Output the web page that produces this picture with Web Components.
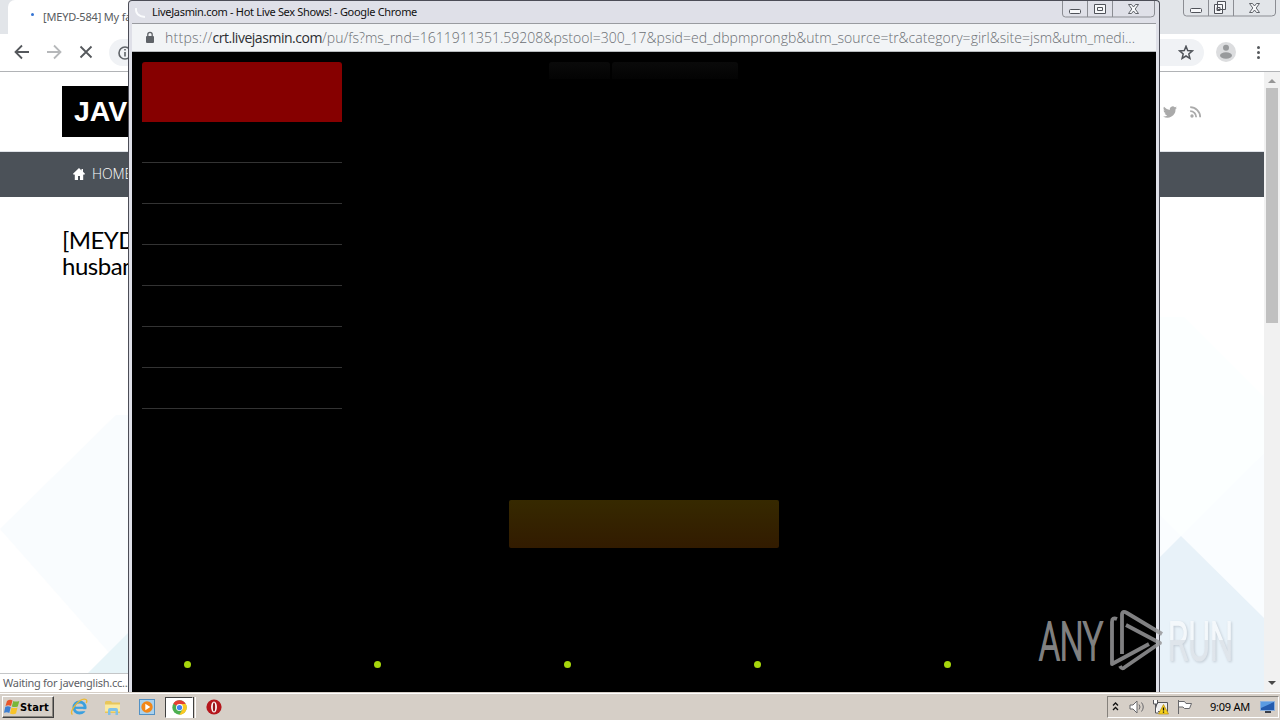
<!DOCTYPE html>
<html lang="en">
<head>
<meta charset="utf-8">
<title>Desktop</title>
<style>
    html, body { margin: 0; width: 1280px; height: 720px; overflow: hidden; }
</style>
</head>
<body>
<desktop-screen></desktop-screen>

<script>
// Text set to a fixed run length by spreading the difference over its letters
class TextRun extends HTMLElement {
    connectedCallback() {
        this.attachShadow({ mode: 'open' }).innerHTML =
            '<style>:host { display: inline-block; white-space: nowrap; flex: none; }</style><slot></slot>';
        const target = Number(this.getAttribute('length'));
        const natural = this.getBoundingClientRect().width;
        this.style.letterSpacing = (target - natural) / this.textContent.length + 'px';
    }
}
customElements.define('text-run', TextRun);

class CaptionButtons extends HTMLElement {
    connectedCallback() {
        const middle = this.hasAttribute('restore')
            ? '<path d="M34.500 2.500h8v8h-8zM31.500 5.500h8v9h-8zM34 8.500h3v3h-3z"/>'
            : '<path d="M32.500 4.500h11v9h-11zM35.500 7.500h5v3h-5z"/>';
        this.attachShadow({ mode: 'open' }).innerHTML = `
            <style>
                :host { display: block; width: 93px; height: 18px; }
                svg { display: block; }
            </style>
            <svg width="93" height="18" fill="none" stroke="#50535a">
                <path stroke="#8b8d93" d="M.5 0v14q0 3 3 3h85q4 0 4-3V0M25.500 0v17M50.500 0v17"/>
                <rect x="7.500" y="9.500" width="11" height="4" rx="1" fill="#f7f8fa"/>
                <g fill="#f7f8fa">${middle}</g>
                <path fill="#f7f8fa" stroke-width=".9" d="M66.500 4.500h3l2 2.500 2-2.500h3l-3.300 4.500 3.300 4.500h-3l-2-2.500-2 2.500h-3L69.800 9z"/>
            </svg>
        `;
    }
}
customElements.define('caption-buttons', CaptionButtons);

class ScrollBar extends HTMLElement {
    connectedCallback() {
        this.attachShadow({ mode: 'open' }).innerHTML = `
            <style>
                :host {
                    display: flex;
                    flex-direction: column;
                    align-items: center;
                    width: 16px;
                    background: #f1f1f1;
                }
                svg { display: block; height: 16px; }
                .thumb { width: 12px; height: 235px; background: #c0c0c0; }
                .rest { flex: 1; }
            </style>
            <svg width="16" height="16"><path fill="#969696" d="M4 11l4-4 4 4z"/></svg>
            <div class="thumb"></div>
            <div class="rest"></div>
            <svg width="16" height="16"><path fill="#484848" d="M4 5h8l-4 4z"/></svg>
        `;
    }
}
customElements.define('scroll-bar', ScrollBar);

class SitePage extends HTMLElement {
    connectedCallback() {
        this.attachShadow({ mode: 'open' }).innerHTML = `
            <style>
                :host {
                    display: block;
                    background: #fff;
                    overflow: hidden;
                    position: relative;
                    font-family: Lato, sans-serif;
                }
                .shapes { position: absolute; left: 0; top: 0; }
                header {
                    position: relative;
                    display: flex;
                    justify-content: space-between;
                    height: 80px;
                    padding: 14px 62px 0 62px;
                    box-sizing: border-box;
                    border-bottom: 1px solid #dfe2e8;
                }
                .logo {
                    width: 180px;
                    height: 51px;
                    padding-left: 12px;
                    box-sizing: border-box;
                    background: #000;
                    color: #fff;
                    font: bold 28.5px/51px "Liberation Sans", Arial, sans-serif;
                }
                .social { padding-top: 19px; display: flex; gap: 12px; }
                .social svg { display: block; }
                nav {
                    position: relative;
                    display: flex;
                    align-items: center;
                    gap: 7px;
                    height: 45px;
                    padding-left: 73px;
                    background: #4b5158;
                    color: #fff;
                    font: 300 14px "Open Sans", sans-serif;
                }
                nav svg { margin-bottom: 1px; }
                nav text-run { margin-bottom: 2px; }
                h1 {
                    position: relative;
                    display: flex;
                    flex-direction: column;
                    align-items: flex-start;
                    margin: 30px 0 0 62px;
                    font-weight: 400;
                    font-size: 24px;
                    line-height: 26px;
                    color: #000;
                }
            </style>
            <svg class="shapes" width="1264" height="620">
                <path fill="#f9fcfe" d="M0 457L116 343H140V602H128z"/>
                <path fill="#e7f4f8" d="M88 601L140 549V620H69z"/>
                <path fill="#fcffff" d="M1150 245H1184L1264 325V620H1150z"/>
                <path fill="#fafdff" d="M1264 382L1181 464 1150 434V620H1264z"/>
                <path fill="#e8f2f9" d="M1150 495L1181 464 1264 546V620H1150z"/>
            </svg>
            <header>
                <div class="logo">JAV</div>
                <div class="social">
                    <svg width="14" height="14" viewBox="0 0 24 24" fill="#aaa"><path d="M24 4.600a10 10 0 0 1-2.800.8 5 5 0 0 0 2.100-2.700 10 10 0 0 1-3.100 1.200 4.900 4.900 0 0 0-8.400 4.500A14 14 0 0 1 1.700 3.200a4.900 4.900 0 0 0 1.500 6.500 5 5 0 0 1-2.200-.6 4.900 4.900 0 0 0 4 4.900 5 5 0 0 1-2.200.1 4.900 4.900 0 0 0 4.600 3.400A10 10 0 0 1 0 19.500 14 14 0 0 0 21.500 7.100z"/></svg>
                    <svg width="13" height="14" fill="none" stroke="#aaa" stroke-width="1.800"><circle cx="3" cy="11" r=".8"/><path d="M1.200 6.200a6 6 0 0 1 6 6M1.200 2.200a10 10 0 0 1 10 10"/></svg>
                </div>
            </header>
            <nav>
                <svg width="12" height="12" fill="#fff"><path d="M6 0L0 5.800 1 7l.8-.7V12H5V8h2v4h3.200V6.300L11 7l1-1.200-2-2V1H8.500v1.400z"/></svg>
                <text-run length="40">HOME</text-run>
            </nav>
            <h1><text-run length="74">[MEYD</text-run><text-run length="73">husban</text-run></h1>
        `;
    }
}
customElements.define('site-page', SitePage);

class MainBrowser extends HTMLElement {
    connectedCallback() {
        this.attachShadow({ mode: 'open' }).innerHTML = `
            <style>
                :host {
                    display: flex;
                    flex-direction: column;
                    overflow: hidden;
                }
                .strip {
                    display: flex;
                    justify-content: space-between;
                    height: 34px;
                    padding: 0 4px 0 8px;
                    background: #e2e5e9;
                }
                .strip caption-buttons { margin-top: -1px; }
                .tab {
                    display: flex;
                    align-items: center;
                    gap: 9px;
                    width: 240px;
                    padding: 0 0 2px 23px;
                    box-sizing: border-box;
                    background: #fff;
                    border-radius: 7px 7px 0 0;
                    font: 11px "Noto Sans", sans-serif;
                    color: #585b60;
                }
                .tab i { width: 3px; height: 3px; margin-top: -4px; border-radius: 50%; background: #3474d4; }
                .bar {
                    display: flex;
                    align-items: center;
                    height: 37px;
                    background: #fff;
                    border-bottom: 1px solid #b1b3b6;
                }
                .omni {
                    display: flex;
                    align-items: center;
                    justify-content: space-between;
                    width: 1095px;
                    height: 27px;
                    padding: 0 10px 0 9px;
                    box-sizing: border-box;
                    border-radius: 14px;
                    background: #f0f2f5;
                }
                svg { display: block; flex: none; }
                .body { display: flex; flex: 1; min-height: 0; }
                site-page { flex: 1; }
                .status {
                    position: absolute;
                    left: 0;
                    bottom: 0;
                    width: 200px;
                    height: 19px;
                    padding-left: 3px;
                    box-sizing: border-box;
                    background: #fff;
                    border-top: 1px solid #c4c6c8;
                    font: 11px/18px "Noto Sans", sans-serif;
                    color: #5d6065;
                }
            </style>
            <div class="strip">
                <div class="tab"><i></i><text-run length="92">[MEYD-584] My fat</text-run></div>
                <caption-buttons restore></caption-buttons>
            </div>
            <div class="bar">
                <svg width="109" height="37" fill="none" stroke-width="1.800">
                    <path stroke="#55585c" d="M29 18H16M22 11.500L15.500 18l6.500 6.500"/>
                    <path stroke="#b6b8ba" d="M47 18h13M54 11.500l6.500 6.500-6.500 6.500"/>
                    <path stroke="#55585c" d="M80.500 12.500l11 11M91.500 12.500l-11 11"/>
                </svg>
                <div class="omni">
                    <svg width="14" height="14" fill="none" stroke="#5f6368" stroke-width="1.600"><circle cx="7" cy="7" r="6"/><path d="M7 6v4.500M7 3v1.600"/></svg>
                    <svg width="16" height="16" fill="none" stroke="#50545a" stroke-width="1.500"><path d="M8 1.300l1.700 4.300 4.600.3-3.500 3 1.100 4.500L8 11l-3.900 2.400 1.100-4.500-3.500-3 4.600-.3z"/></svg>
                </div>
                <svg width="76" height="37">
                    <circle cx="22" cy="18" r="10" fill="#dcdddf"/>
                    <circle cx="22" cy="13.800" r="3" fill="#989a9c"/>
                    <ellipse cx="22" cy="21.500" rx="6" ry="3.200" fill="#989a9c"/>
                    <g fill="#55585c"><circle cx="54.500" cy="13.500" r="1.500"/><circle cx="54.500" cy="18.500" r="1.500"/><circle cx="54.500" cy="23.500" r="1.500"/></g>
                </svg>
            </div>
            <div class="body">
                <site-page></site-page>
                <scroll-bar></scroll-bar>
            </div>
            <div class="status"><text-run length="127">Waiting for javenglish.cc...</text-run></div>
        `;
    }
}
customElements.define('main-browser', MainBrowser);

class CamPage extends HTMLElement {
    connectedCallback() {
        this.attachShadow({ mode: 'open' }).innerHTML = `
            <style>
                :host {
                    display: grid;
                    grid-template-columns: 200px 1fr 200px;
                    grid-template-rows: 438px 1fr auto;
                    padding: 10px 10px 24px;
                    background: #000;
                }
                .banner { height: 60px; border-radius: 3px 3px 0 0; background: #860000; }
                .row { height: 40px; border-bottom: 1px solid #333; }
                .tabs { display: flex; justify-content: center; gap: 2px; padding-right: 1px; }
                .tabs div { width: 61px; height: 17px; border-radius: 3px 3px 0 0; background: linear-gradient(#0a0a0a, #030303); }
                .tabs div + div { width: 126px; }
                .cta {
                    grid-column: 1 / 4;
                    justify-self: center;
                    width: 270px;
                    height: 48px;
                    border-radius: 2px;
                    background: linear-gradient(#362900, #321b00);
                }
                .dots { grid-column: 1 / 4; display: flex; gap: 183px; padding-left: 42px; }
                .dots i { width: 7px; height: 7px; border-radius: 50%; background: #a6d60c; }
            </style>
            <div>
                <div class="banner"></div>
                ${'<div class="row"></div>'.repeat(7)}
            </div>
            <div class="tabs"><div></div><div></div></div>
            <div></div>
            <div class="cta"></div>
            <div class="dots">${'<i></i>'.repeat(5)}</div>
        `;
    }
}
customElements.define('cam-page', CamPage);

class PopupBrowser extends HTMLElement {
    connectedCallback() {
        this.attachShadow({ mode: 'open' }).innerHTML = `
            <style>
                :host {
                    display: flex;
                    flex-direction: column;
                    box-sizing: border-box;
                    padding: 0 3px;
                    border: 1px solid #4c4d57;
                    border-bottom: 0;
                    border-radius: 4px 4px 0 0;
                    background: #dfe0e8;
                    overflow: hidden;
                }
                .title {
                    display: flex;
                    height: 22px;
                    padding-right: 1px;
                    font: 11px/22px "Noto Sans", sans-serif;
                    color: #111;
                }
                .title svg { margin: 3px 2px 0 0; }
                caption-buttons { margin-left: auto; margin-top: -1px; }
                .address {
                    display: flex;
                    align-items: center;
                    gap: 10px;
                    height: 27px;
                    padding-left: 13px;
                    background: #f2f4f6;
                    border-top: 1px solid #999ba0;
                    border-bottom: 1px solid #b7babd;
                    font: 300 14px "Open Sans", sans-serif;
                    color: #6b6f74;
                }
                .url { display: flex; }
                .url b { font-weight: 400; color: #2c2e32; }
                cam-page { flex: 1; }
            </style>
            <div class="title">
                <svg width="18" height="16" fill="none" stroke="#fafbfd" stroke-width="1.800"><path d="M4 4q-1 8 9 9"/></svg>
                <text-run length="265">LiveJasmin.com - Hot Live Sex Shows! - Google Chrome</text-run>
                <caption-buttons></caption-buttons>
            </div>
            <div class="address">
                <svg width="10" height="13"><rect x="1" y="5" width="8" height="7" rx="1" fill="#5f6368"/><path d="M2.800 5V3.500a2.200 2.200 0 0 1 4.400 0V5" fill="none" stroke="#5f6368" stroke-width="1.300"/></svg>
                <div class="url"><text-run length="47.500">https://</text-run><b><text-run length="109.500">crt.livejasmin.com</text-run></b><text-run length="813">/pu/fs?ms_rnd=1611911351.59208&amp;pstool=300_17&amp;psid=ed_dbpmprongb&amp;utm_source=tr&amp;category=girl&amp;site=jsm&amp;utm_medi...</text-run></div>
            </div>
            <cam-page></cam-page>
        `;
    }
}
customElements.define('popup-browser', PopupBrowser);

class TaskBar extends HTMLElement {
    connectedCallback() {
        this.attachShadow({ mode: 'open' }).innerHTML = `
            <style>
                :host {
                    display: flex;
                    align-items: center;
                    justify-content: space-between;
                    height: 28px;
                    padding: 2px 1px 0 2px;
                    box-sizing: border-box;
                    background: linear-gradient(#d6cfc7 1px, #fff 1px, #fff 2px, #d6cfc7 2px);
                    color: #000;
                }
                .left, .start, .tray { display: flex; align-items: center; }
                .start {
                    width: 52px;
                    height: 22px;
                    margin-right: 16px;
                    padding-left: 1px;
                    box-sizing: border-box;
                    border: 1px solid;
                    border-color: #fff #404040 #404040 #fff;
                    box-shadow: inset -1px -1px #8a867f;
                    font: bold 11px "DejaVu Sans Condensed", sans-serif;
                }
                svg { display: block; flex: none; }
                .active {
                    display: flex;
                    align-items: center;
                    justify-content: center;
                    width: 28px;
                    height: 21px;
                    margin-left: 9px;
                    box-sizing: border-box;
                    background: #fff;
                    border: 1px solid;
                    border-color: #404040 #fff #fff #404040;
                }
                .stack { width: 1px; height: 21px; margin: 0 10px 0 0; border: solid #fff; border-width: 0 1px; border-left-color: #404040; }
                .tray {
                    width: 172px;
                    height: 22px;
                    box-sizing: border-box;
                    border: 1px solid;
                    border-color: #85817b #fff #fff #85817b;
                    font: 11px "Noto Sans", sans-serif;
                }
                .tray text-run { margin: 0 0 1px 1px; }
            </style>
            <div class="left">
                <div class="start">
                    <svg width="16" height="18">
                        <path fill="#e8562a" d="M3 3q3-2 5.500-.5L7 8Q4.500 6.500 1.500 8z"/>
                        <path fill="#79b739" d="M9.300 3q2.500 1.200 6 0l-1.500 5.500Q10.500 9.500 7.800 8.500z"/>
                        <path fill="#3d7fd2" d="M1.300 8.800Q4 7.500 6.800 9l-1.500 6Q3 13.500 0 14.800z"/>
                        <path fill="#f8c328" d="M7.500 9.500q3 1 6 0l-1.500 6q-3 1.300-6 0z"/>
                    </svg>
                    <text-run length="29">Start</text-run>
                </div>
                <svg width="18" height="18" fill="none">
                    <circle cx="9.500" cy="9.500" r="5.600" stroke="#3ba0df" stroke-width="3"/>
                    <path stroke="#3ba0df" stroke-width="2.200" d="M5 9.800h9.500"/>
                    <path stroke="#d6cfc7" stroke-width="2" d="M11 12.200h6"/>
                    <path stroke="#edb92f" stroke-width="1.300" d="M2.500 16.500C-2 14 10-1 16 1.500q1.500 1 .3 3.500"/>
                </svg>
                <svg width="18" height="18" style="margin-left:16px">
                    <path fill="#e8c65a" d="M1 4l1-1h5l1 1.500h8V15H1z"/>
                    <path fill="#fbeaa0" d="M1 6.500h15v7H1z"/>
                    <path fill="#7fc1e8" d="M4 17v-5q0-2 2-2h6q2 0 2 2v5h-2.500v-4h-5v4z"/>
                </svg>
                <svg width="18" height="18" style="margin-left:16px">
                    <rect x="1.500" y="1.500" width="15" height="15" fill="#a9d1ed" stroke="#5291c4"/>
                    <circle cx="9" cy="9" r="5.700" fill="#f28718"/>
                    <path fill="#fff" d="M7.300 5.700v6.600L12.300 9z"/>
                </svg>
                <div class="active">
                    <svg width="15" height="15" viewBox="0 0 24 24">
                        <circle cx="12" cy="12" r="11.500" fill="#4caf50"/>
                        <path fill="#e53f34" d="M12 12L2 6a11.500 11.500 0 0 1 20 .5H12z"/>
                        <path fill="#fbc823" d="M12 12l5 3-5.500 8.500A11.500 11.500 0 0 0 22.200 6.500H12z"/>
                        <circle cx="12" cy="12" r="5.500" fill="#fff"/><circle cx="12" cy="12" r="4.200" fill="#4285f4"/>
                    </svg>
                </div>
                <div class="stack"></div>
                <svg width="16" height="16">
                    <circle cx="8" cy="8" r="7.600" fill="#b5161c"/>
                    <ellipse cx="8" cy="8" rx="2.900" ry="5.500" fill="#fff"/>
                    <ellipse cx="8" cy="8" rx="1.200" ry="4.500" fill="#96151a"/>
                </svg>
            </div>
            <div class="tray">
                <svg width="101" height="20">
                    <path fill="none" stroke="#111" stroke-width="1.300" d="M5 8.500L7.500 6 10 8.500M5 13l2.500-2.500L10 13"/>
                    <g fill="#fff" stroke="#68686b"><path d="M22 8h3l4-4v12l-4-4h-3z"/><path fill="none" d="M31 7.500q2 2.500 0 5M33.500 5.500q3.500 4.500 0 9"/></g>
                    <path fill="#eee" stroke="#55565a" d="M48.500 5.500h11v9h-11z"/>
                    <path fill="#fff" stroke="#55565a" d="M45.500 3v4h4V3M47.500 7v9h3"/>
                    <path fill="#f8d31c" stroke="#b58a0c" stroke-width=".7" d="M55.500 7.500l5 9.500h-10z"/>
                    <path stroke="#111" stroke-width="1.300" d="M55.500 10.500v3M55.500 14.500v1.300"/>
                    <path fill="#fff" stroke="#68686b" d="M70.500 3v14M70.500 4.500h6l1.500 2h5.500l-2 5h-5l-1.500-1.500h-4.500"/>
                </svg>
                <text-run length="40">9:09 AM</text-run>
                <svg width="16" height="14" style="margin-left:10px">
                    <path fill="#245bae" stroke="#8bb1df" d="M.5 1.500h14v9H.5z"/><path fill="#5a9be2" d="M1 2h13L1 8z"/><path fill="#3a3e48" d="M5 11h6v2H5z"/>
                </svg>
            </div>
        `;
    }
}
customElements.define('task-bar', TaskBar);

class WaterMark extends HTMLElement {
    connectedCallback() {
        this.attachShadow({ mode: 'open' }).innerHTML = `
            <style>
                :host { display: block; }
                svg { display: block; }
                text { font: 300 53px Roboto, sans-serif; stroke-width: 2; }
                .run { filter: drop-shadow(1px 1px 1px #c3ccd5); }
            </style>
            <svg width="220" height="80">
                <defs>
                    <linearGradient id="run" gradientUnits="userSpaceOnUse" x1="0" y1="15" x2="0" y2="55">
                        <stop offset=".48" stop-color="#f4f8fb"/><stop offset=".48" stop-color="#dfe5eb"/>
                    </linearGradient>
                </defs>
                <text x="3" y="54" textLength="64" lengthAdjust="spacingAndGlyphs" fill="#818181" stroke="#818181">ANY</text>
                <g fill="none" stroke="#969799" stroke-opacity=".85" stroke-width="3.800" stroke-linejoin="round">
                    <path d="M81 13q-5-2-5 3v42l37-20M86 48V9q0-5 5-2l35 21M90 19l34 18-35 24q-3 3-5-1"/>
                </g>
                <text class="run" x="132" y="54" textLength="65" lengthAdjust="spacingAndGlyphs" fill="url(#run)" stroke="url(#run)">RUN</text>
            </svg>
        `;
    }
}
customElements.define('water-mark', WaterMark);

class DesktopScreen extends HTMLElement {
    connectedCallback() {
        this.attachShadow({ mode: 'open' }).innerHTML = `
            <style>
                :host { display: flex; flex-direction: column; position: relative; width: 1280px; height: 720px; overflow: hidden; }
                .area { position: relative; flex: 1; }
                main-browser { position: absolute; inset: 0; }
                popup-browser { position: absolute; left: 128px; top: 0; width: 1032px; height: 692px; }
                water-mark { position: absolute; left: 1036px; top: 606px; }
            </style>
            <div class="area">
                <main-browser></main-browser>
                <popup-browser></popup-browser>
                <water-mark></water-mark>
            </div>
            <task-bar></task-bar>
        `;
    }
}
customElements.define('desktop-screen', DesktopScreen);
</script>
</body>
</html>
